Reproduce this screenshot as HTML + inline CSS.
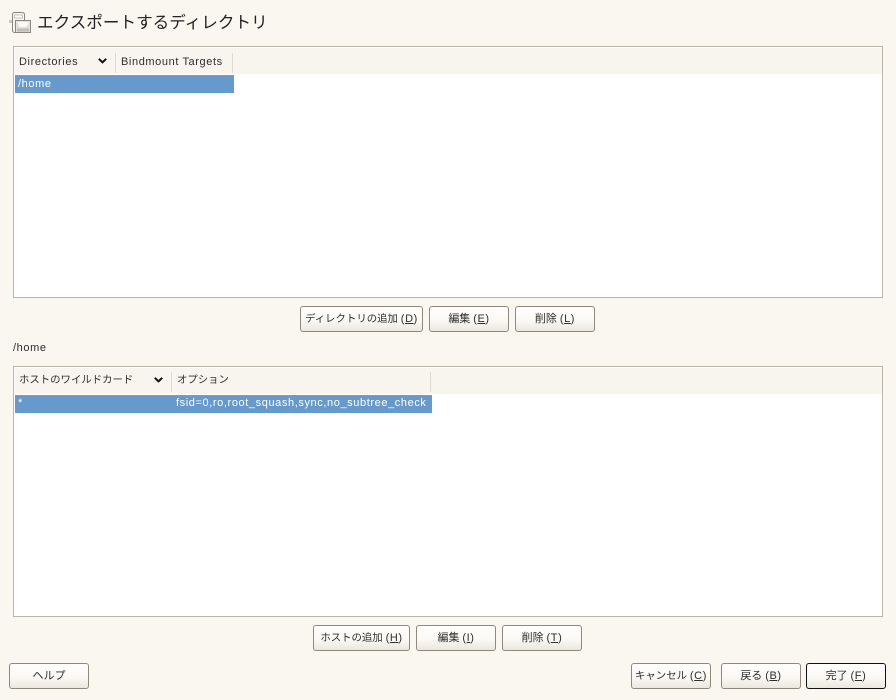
<!DOCTYPE html>
<html><head><meta charset="utf-8"><style>
html,body{margin:0;padding:0}
body{width:896px;height:700px;background:#faf7f1;position:relative;overflow:hidden;font-family:"Liberation Sans","Noto Sans CJK JP",sans-serif;font-size:10.4px;color:#2e2e2e}
.a{position:absolute;white-space:nowrap}
.l{font-size:11px;letter-spacing:.6px}
.k{font-size:11px}
.panel{position:absolute;left:13px;width:868px;background:#fff;border:1px solid #bcb6aa}
.hd{position:absolute;left:1px;right:0;top:1px;height:26px;background:#f8f5ee}
.sep{position:absolute;width:1px;background:#dedad0}
.sel{position:absolute;background:#6699cc;color:#fff;height:18px;left:1px;top:28px;border-top:1px solid #8a97a6;box-sizing:border-box}
.sel span,.hd span{position:absolute;line-height:14px;white-space:nowrap}
.btn{position:absolute;box-sizing:border-box;height:26px;border:1px solid #8f897d;border-radius:3px;background:linear-gradient(#fffefd 0,#fbf9f5 55%,#ebe7df 100%);text-align:center;line-height:25px;color:#2e2e2e;white-space:nowrap}
.btn u{text-underline-offset:1px}
</style></head><body>
<svg class="a" style="left:9px;top:11px" width="24" height="24" viewBox="0 0 24 24">
<rect x="0" y="9" width="3" height="3" fill="#cfcbc1"/>
<rect x="3.5" y="1.5" width="12" height="20" rx="2" fill="#f6f4ee" stroke="#8b887f"/>
<rect x="5.5" y="4" width="8" height="3" fill="#fff" stroke="#b0ada3" stroke-width=".7"/>
<rect x="6.5" y="9.5" width="15" height="12" fill="#e2e0d9" stroke="#8b887f"/>
<path d="M8 11h12l-3 5h-6z" fill="#fafaf8"/>
<rect x="8" y="17.5" width="12" height="3" fill="#c0bdb4"/>
</svg>
<div class="a" style="left:37px;top:10px;font-size:16.6px;line-height:26px;color:#222">エクスポートするディレクトリ</div>

<div class="panel" style="top:46px;height:250px">
<div class="hd">
<span class="l" style="left:4px;top:7px">Directories</span>
<svg class="a" style="left:83px;top:10px" width="9" height="6" viewBox="0 0 9 6"><path d="M.8.8 4.5 4.4 8.2.8" fill="none" stroke="#111" stroke-width="2"/></svg>
<span class="l" style="left:106px;top:7px">Bindmount Targets</span>
<div class="sep" style="left:100px;top:5px;height:20px"></div>
<div class="sep" style="left:217px;top:5px;height:20px"></div>
</div>
<div class="sel" style="width:219px"><span class="l" style="left:3px;top:1px">/home</span></div>
</div>

<div class="btn" style="left:300px;top:306px;width:123px">ディレクトリの追加 <span class="l">(<u>D</u>)</span></div>
<div class="btn" style="left:429px;top:306px;width:80px"><span class="k">編集</span> <span class="l">(<u>E</u>)</span></div>
<div class="btn" style="left:515px;top:306px;width:80px"><span class="k">削除</span> <span class="l">(<u>L</u>)</span></div>

<div class="a l" style="left:13px;top:341px;line-height:14px">/home</div>

<div class="panel" style="top:366px;height:249px">
<div class="hd">
<span style="left:4px;top:6px">ホストのワイルドカード</span>
<svg class="a" style="left:139px;top:9px" width="9" height="6" viewBox="0 0 9 6"><path d="M.8.8 4.5 4.4 8.2.8" fill="none" stroke="#111" stroke-width="2"/></svg>
<span style="left:162px;top:6px">オプション</span>
<div class="sep" style="left:156px;top:4px;height:20px"></div>
<div class="sep" style="left:415px;top:4px;height:20px"></div>
</div>
<div class="sel" style="width:417px"><span class="l" style="left:3px;top:0">*</span><span class="l" style="left:161px;top:0">fsid=0,ro,root_squash,sync,no_subtree_check</span></div>
</div>

<div class="btn" style="left:313px;top:625px;width:97px">ホストの追加 <span class="l">(<u>H</u>)</span></div>
<div class="btn" style="left:416px;top:625px;width:80px"><span class="k">編集</span> <span class="l">(<u>I</u>)</span></div>
<div class="btn" style="left:502px;top:625px;width:80px"><span class="k">削除</span> <span class="l">(<u>T</u>)</span></div>

<div class="btn" style="left:9px;top:663px;width:80px"><span class="k">ヘルプ</span></div>
<div class="btn" style="left:631px;top:663px;width:80px">キャンセル <span class="l">(<u>C</u>)</span></div>
<div class="btn" style="left:721px;top:663px;width:80px"><span class="k">戻る</span> <span class="l">(<u>B</u>)</span></div>
<div class="btn" style="left:806px;top:663px;width:80px;border-color:#111"><span class="k">完了</span> <span class="l">(<u>F</u>)</span></div>
</body></html>
